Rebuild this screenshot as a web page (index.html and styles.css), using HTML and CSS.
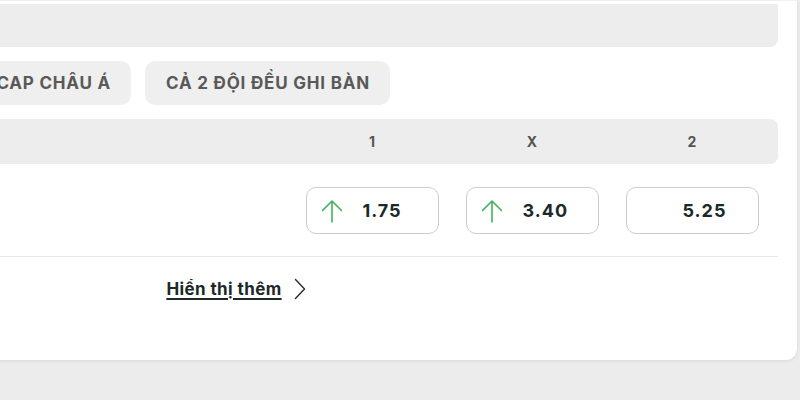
FILE: index.html
```html
<!DOCTYPE html>
<html lang="vi">
<head>
<meta charset="utf-8">
<link rel="stylesheet" href="styles.css">
</head>
<body>
<div class="page">
  <div class="card">
    <div class="topbar"></div>
    <div class="tabs">
      <div class="tab">HANDICAP CHÂU Á</div>
      <div class="tab">CẢ 2 ĐỘI ĐỀU GHI BÀN</div>
    </div>
    <div class="head">
      <div class="col">1</div>
      <div class="col">X</div>
      <div class="col">2</div>
    </div>
    <div class="odds">
      <div class="cell">
        <div class="btn">
          <span class="ico"><svg width="22" height="24" viewBox="0 0 22 24"><path d="M11 23V2M1.5 11.5L11 2l9.5 9.5" fill="none" stroke="#3fb45a" stroke-width="1.6" stroke-linecap="round" stroke-linejoin="round"/></svg></span>
          <span class="num">1.75</span>
        </div>
      </div>
      <div class="cell">
        <div class="btn">
          <span class="ico"><svg width="22" height="24" viewBox="0 0 22 24"><path d="M11 23V2M1.5 11.5L11 2l9.5 9.5" fill="none" stroke="#3fb45a" stroke-width="1.6" stroke-linecap="round" stroke-linejoin="round"/></svg></span>
          <span class="num">3.40</span>
        </div>
      </div>
      <div class="cell">
        <div class="btn">
          <span class="ico"></span>
          <span class="num">5.25</span>
        </div>
      </div>
    </div>
    <div class="divider"></div>
    <div class="more">
      <a class="more-link">Hiển thị thêm</a>
      <svg class="chev" width="12" height="22" viewBox="0 0 12 22"><path d="M1.5 1.5L10.5 11l-9 9.5" fill="none" stroke="#22302f" stroke-width="1.4" stroke-linecap="round" stroke-linejoin="round"/></svg>
    </div>
  </div>
</div>
</body>
</html>
```
FILE: styles.css
```css
html, body {
  margin: 0;
  padding: 0;
}
body {
  background: #ececec;
  font-family: Inter, "Noto Sans", "Liberation Sans", sans-serif;
  width: 800px;
  height: 400px;
  overflow: hidden;
}
.page {
  height: 400px;
  overflow: hidden;
}
.card {
  box-sizing: border-box;
  margin-left: -320px;
  width: 1118px;
  height: 360px;
  background: #fff;
  padding: 3px 19px 0 20px;
  border-top: 1px solid #f1f1f1;
  border-right: 1px solid #e4e4e4;
  border-radius: 0 0 12px 12px;
  box-shadow: 0 2px 3px rgba(0, 0, 0, 0.05);
}
.topbar {
  height: 43px;
  background: #ededed;
  border-radius: 0 0 8px 8px;
}
.tabs {
  margin-top: 14px;
  display: flex;
  justify-content: flex-end;
  gap: 14px;
  padding-right: 388px;
}
.tab {
  height: 44px;
  display: flex;
  align-items: center;
  padding: 0 20px 0 21px;
  border-radius: 10px;
  background: #efefef;
  color: #595959;
  font-size: 17px;
  font-weight: 700;
  letter-spacing: 0.8px;
  white-space: nowrap;
}
.head {
  margin-top: 14px;
  height: 45px;
  background: #ededed;
  border-radius: 8px;
  display: flex;
  justify-content: flex-end;
  align-items: center;
  padding-right: 6px;
}
.col {
  width: 160px;
  text-align: center;
  color: #555;
  font-size: 14px;
  font-weight: 700;
}
.odds {
  display: flex;
  justify-content: flex-end;
  padding: 23px 6px 22px 0;
}
.cell {
  width: 160px;
  display: flex;
  justify-content: center;
}
.btn {
  box-sizing: border-box;
  width: 133px;
  height: 47px;
  border: 1px solid #cdcdcd;
  border-radius: 10px;
  display: flex;
  align-items: center;
  padding-left: 14px;
}
.ico {
  width: 22px;
  height: 24px;
  margin-right: 20px;
  display: flex;
}
.num {
  font-size: 18px;
  font-weight: 700;
  color: #1b2928;
  letter-spacing: 1px;
}
.divider {
  height: 1px;
  background: #e8e8e8;
}
.more {
  margin-top: 21px;
  display: flex;
  justify-content: center;
  align-items: center;
  gap: 12px;
  padding-right: 6px;
}
.more-link {
  font-size: 17px;
  font-weight: 700;
  color: #1b2928;
  letter-spacing: 0.4px;
  text-decoration: underline;
  text-underline-offset: 3px;
  text-decoration-thickness: 1.5px;
}
.chev {
  display: block;
}
```
